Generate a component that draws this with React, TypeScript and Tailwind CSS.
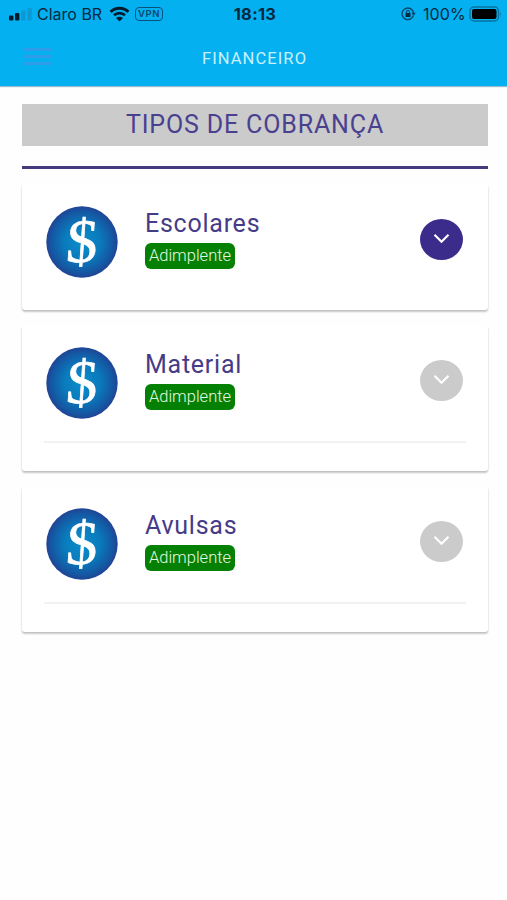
import { useState } from "react";

type Charge = { id: string; name: string; status: string; divider: boolean };

const CHARGES: Charge[] = [
  { id: "escolares", name: "Escolares", status: "Adimplente", divider: false },
  { id: "material", name: "Material", status: "Adimplente", divider: true },
  { id: "avulsas", name: "Avulsas", status: "Adimplente", divider: true },
];

function StatusBar() {
  return (
    <div className="grid h-7 grid-cols-[1fr_auto_1fr] items-center pl-[9px] pr-[5px] font-['Inter','Liberation_Sans',sans-serif] text-[#05293f]">
      <div className="flex items-center">
        <svg className="shrink-0" width="24" height="13" viewBox="0 0 24 13">
          <rect x="0" y="7.5" width="4.4" height="5" rx="1" fill="#031c2d" />
          <rect x="6" y="5" width="4.4" height="7.5" rx="1" fill="#031c2d" />
          <rect x="12.2" y="2.5" width="4.2" height="10" rx="1" fill="#0b98d3" />
          <rect x="18.5" y="0" width="4.2" height="12.5" rx="1" fill="#0b98d3" />
        </svg>
        <span className="ml-1 w-[67px] whitespace-nowrap text-[16px]">Claro BR</span>
        <svg className="ml-[5px] shrink-0" width="21" height="16" viewBox="0 0 21 16" fill="none" stroke="#031c2d">
          <path d="M1.6 5.8C6.7.9 14.3.9 19.4 5.8" strokeWidth="3" />
          <path d="M5 9.3c3.1-2.9 7.9-2.9 11 0" strokeWidth="2.7" />
          <path d="M10.5 15.6 7 12.1c2-1.7 5-1.7 7 0z" fill="#031c2d" stroke="none" />
        </svg>
        <span className="ml-[5px] flex h-[14px] w-[28px] items-center justify-center rounded-[4px] border-[1.5px] border-[#07527c] text-[9.5px] font-semibold tracking-[0.5px] text-[#07476d]">
          VPN
        </span>
      </div>
      <span className="pr-px text-[16.5px] font-bold tracking-[0.3px]">18:13</span>
      <div className="flex items-center justify-end">
        <svg width="15" height="14" viewBox="0 0 15 14" fill="none" stroke="#07476d" strokeWidth="1.4">
          <path d="M11.2 3A5.8 5.8 0 1 0 12.3 8.8" />
          <path d="M11.2 3a5.8 5.8 0 0 1 1.3 3" />
          <path d="M10.3 5.8h4.5L12.6 9z" fill="#07476d" stroke="none" />
          <rect x="4.5" y="6" width="5" height="4" rx=".6" fill="#05293f" stroke="none" />
          <path d="M5.5 6V5a1.5 1.5 0 0 1 3 0v1" strokeWidth="1.1" />
        </svg>
        <span className="ml-[7px] w-[43px] whitespace-nowrap text-[16px] tracking-[0.1px]">100%</span>
        <svg className="ml-[3px]" width="33" height="16" viewBox="0 0 33 16">
          <rect x="1" y="1" width="28.5" height="14" rx="4" fill="none" stroke="#08719f" strokeWidth="1.4" />
          <rect x="3" y="3" width="24.5" height="10" rx="2" fill="#000" />
          <path d="M31 5.6q1.6 2.4 0 4.8z" fill="#08719f" />
        </svg>
      </div>
    </div>
  );
}

function Coin() {
  return (
    <svg className="size-[72px] shrink-0" viewBox="0 0 72 72">
      <defs>
        <radialGradient id="coin">
          <stop offset="0" stopColor="#0b8dcb" />
          <stop offset=".5" stopColor="#0a7bbd" />
          <stop offset=".85" stopColor="#1458a3" />
          <stop offset="1" stopColor="#204495" />
        </radialGradient>
      </defs>
      <circle cx="36" cy="36" r="35.7" fill="url(#coin)" />
      <text
        x="0"
        y="0"
        transform="translate(34.8 56) skewX(-4)"
        textAnchor="middle"
        className="fill-white stroke-white font-['Liberation_Serif',serif] text-[62px]"
        strokeWidth=".7"
      >
        $
      </text>
    </svg>
  );
}

function ChargeCard({ charge, active, onSelect }: { charge: Charge; active: boolean; onSelect: () => void }) {
  return (
    <section
      className={`rounded-[3px] bg-white px-[22px] shadow-[0_2px_2px_rgba(0,0,0,0.2),0_1px_2px_rgba(0,0,0,0.08)] ${
        charge.divider ? "h-[146px]" : "h-[126px]"
      }`}
    >
      <div className={`flex pt-[22px] ${charge.divider ? "h-[118px] border-b-2 border-[#f2f2f2]" : ""}`}>
        <div className="ml-0.5">
          <Coin />
        </div>
        <div className="ml-[27px] flex-1">
          <h2 className="pt-px text-[25px] leading-[34px] tracking-[0.75px] text-[#463b87]">{charge.name}</h2>
          <span className="mt-[2px] flex h-[26px] w-[90px] items-center justify-center rounded-[6px] bg-[#048104] pt-px text-[16.5px] font-light text-[#e5f8e5]">
            {charge.status}
          </span>
        </div>
        <button
          aria-label={charge.name}
          onClick={onSelect}
          className={`mt-[13px] mr-[3px] flex h-[41px] w-[43px] items-center justify-center rounded-[50%] ${
            active ? "bg-[#3b2c8b]" : "bg-[#cbcbcb]"
          }`}
        >
          <svg width="17" height="11" viewBox="0 0 17 11" fill="none" stroke="#fff" strokeWidth="2.2" className="mb-[2px]">
            <path d="m1.5 1.8 7 7 7-7" />
          </svg>
        </button>
      </div>
    </section>
  );
}

export default function App() {
  const [selected, setSelected] = useState("escolares");

  return (
    <div className="min-h-[900px] w-full bg-[#fefefe] font-['Roboto','Liberation_Sans',sans-serif]">
      <header className="h-[86px] bg-[#05b0f0] shadow-[0_1px_1px_rgba(0,90,140,0.4)]">
        <StatusBar />
        <div className="grid h-[58px] grid-cols-[1fr_auto_1fr] items-center px-6">
          <button aria-label="Menu" className="-mt-px flex w-7 flex-col gap-[4px]">
            <span className="h-[3px] bg-[#2e9dea]" />
            <span className="h-[3px] bg-[#2e9dea]" />
            <span className="h-[3px] bg-[#2e9dea]" />
          </button>
          <h1 className="pl-[2px] pt-[4px] text-[16.5px] tracking-[1.1px] text-[#c8f0fe]">FINANCEIRO</h1>
        </div>
      </header>

      <main className="pl-[22px] pr-[19px] pt-[18px]">
        <h2 className="flex h-[42px] items-center justify-center bg-[#cbcbcb] text-[25px] tracking-[0.85px] text-[#4a4090]">
          TIPOS DE COBRANÇA
        </h2>
        <hr className="mt-5 border-0 border-t-3 border-[#443a7d]" />
        <div className="mt-[15px] flex flex-col gap-[15px]">
          {CHARGES.map((c) => (
            <ChargeCard key={c.id} charge={c} active={c.id === selected} onSelect={() => setSelected(c.id)} />
          ))}
        </div>
      </main>
    </div>
  );
}
